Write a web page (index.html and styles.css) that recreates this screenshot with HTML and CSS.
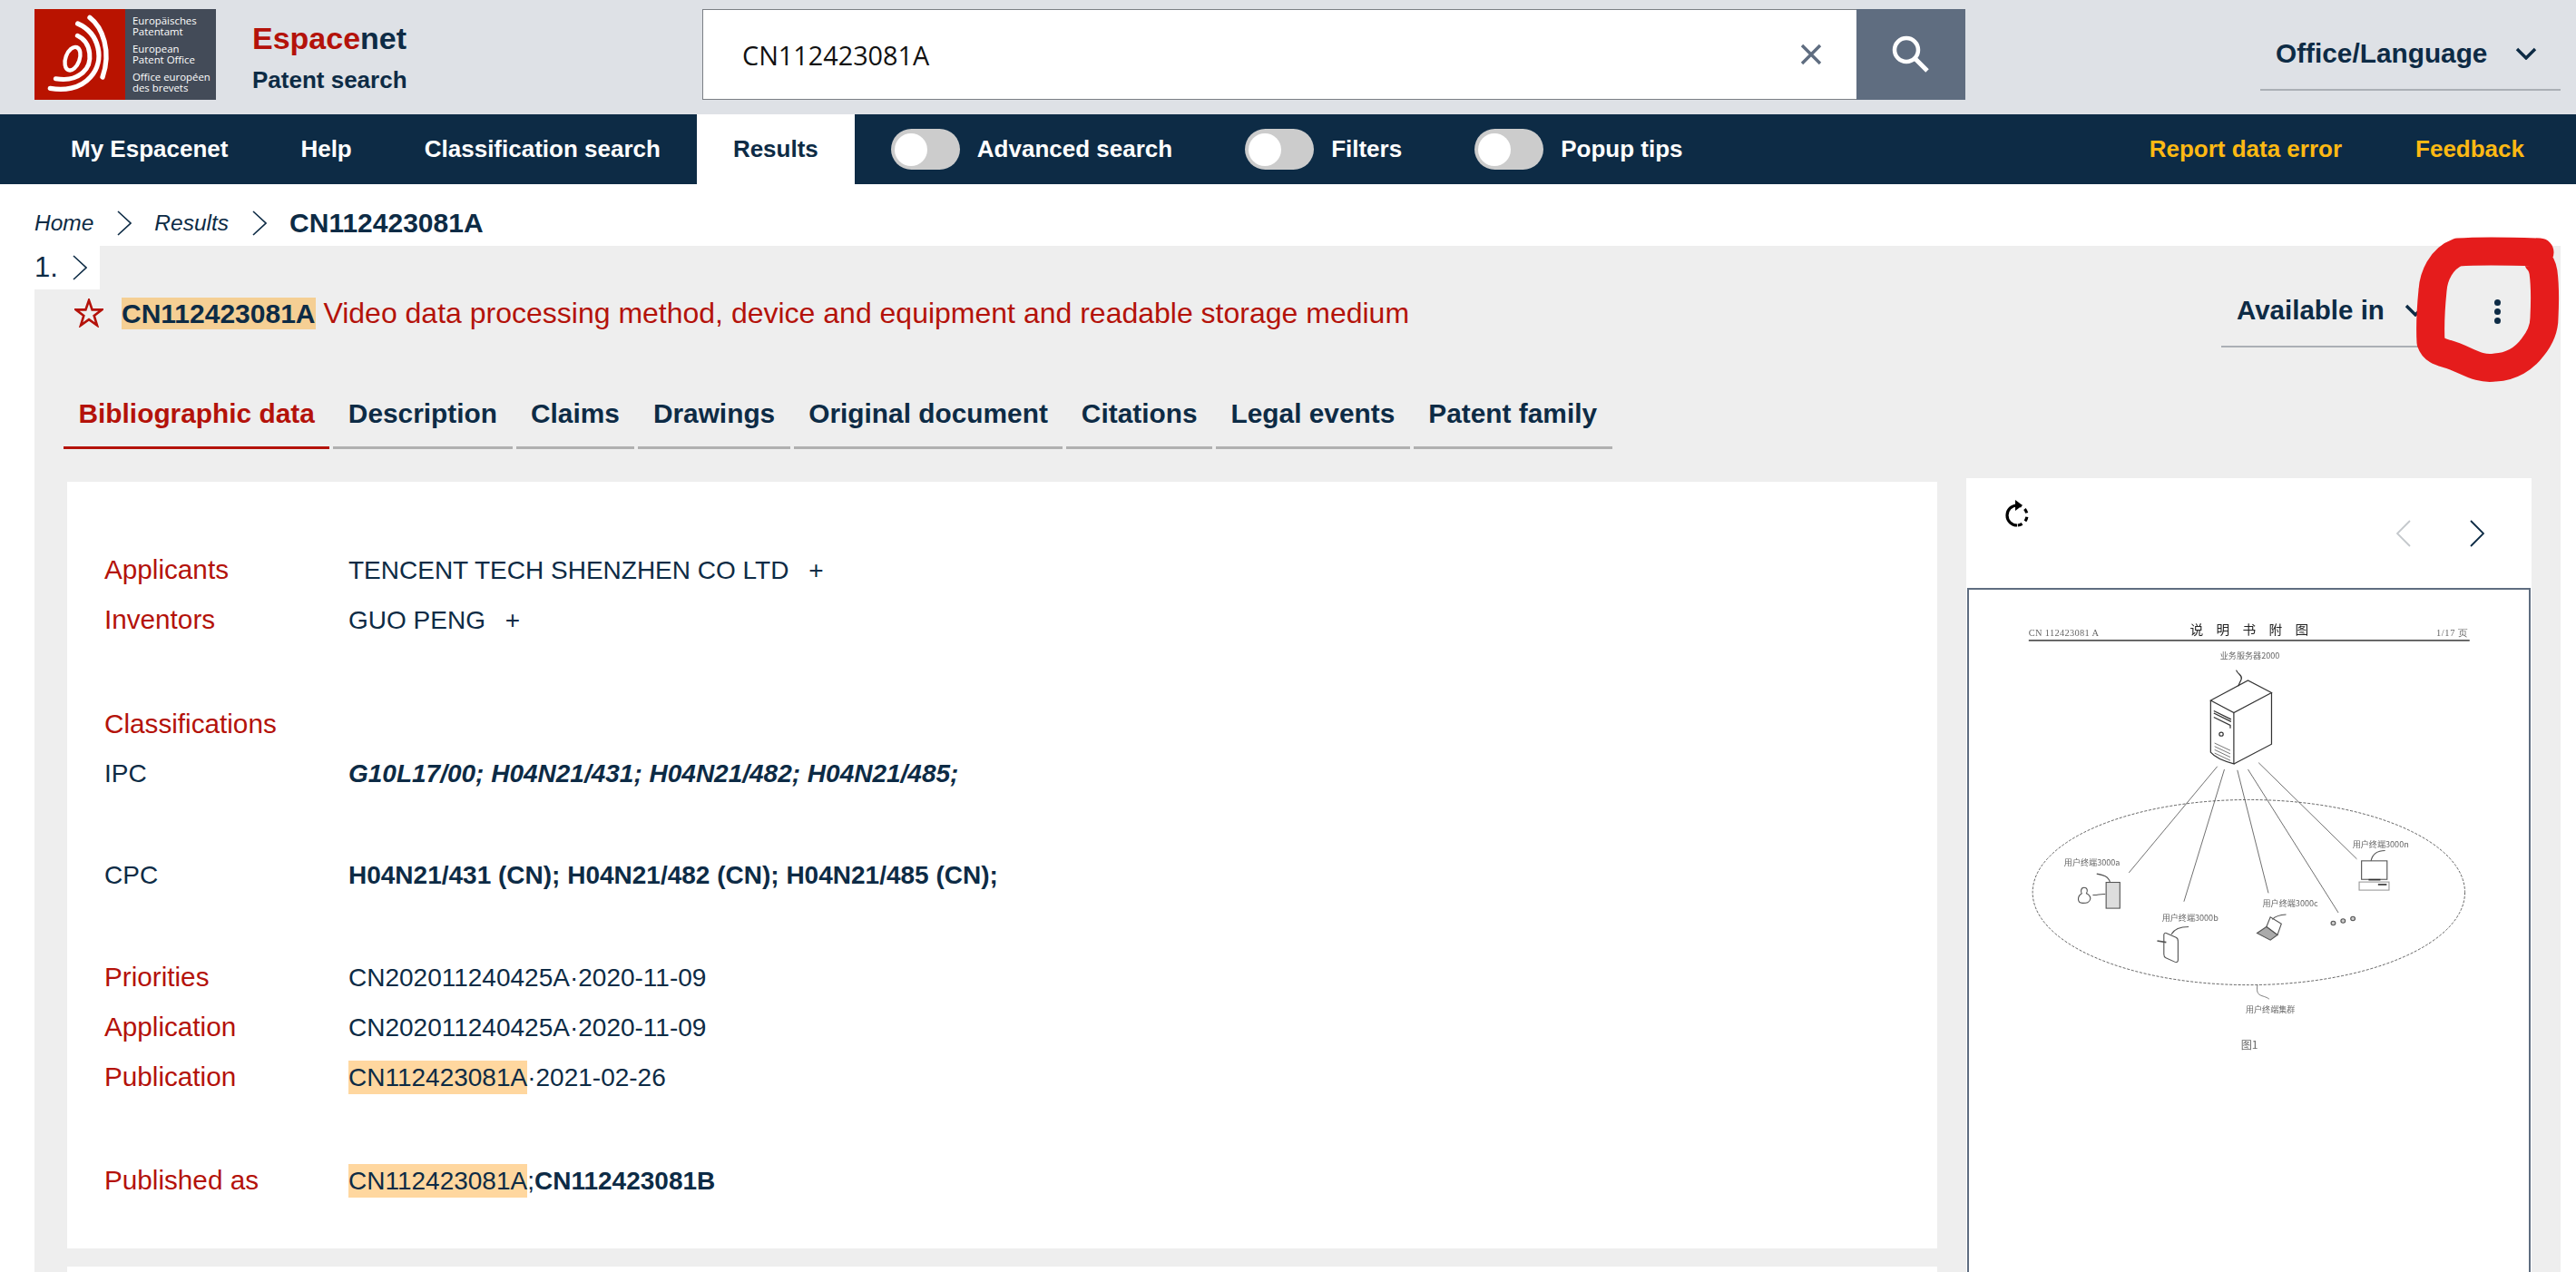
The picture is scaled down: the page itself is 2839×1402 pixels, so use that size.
FILE: index.html
```
<!DOCTYPE html>
<html lang="en">
<head>
  <meta charset="UTF-8">
  <title>Espacenet - CN112423081A</title>
  <link rel="stylesheet" href="styles.css">
</head>
<body>
  <header class="top-header">
    <div class="logo">
      <div class="logo-mark">
        <svg viewBox="0 0 300 300" width="100" height="100">
          <g fill="none" stroke="#fff" stroke-linecap="round">
            <ellipse cx="126" cy="164" rx="23" ry="40" transform="rotate(20 126 164)" stroke-width="13"/>
            <path d="M183 28C225 60 255 140 225 225" stroke-width="16"/>
            <path d="M143 48C215 80 235 170 185 225C150 265 95 270 52 262" stroke-width="16"/>
            <path d="M142 88C190 110 195 180 160 210C130 235 100 235 70 230" stroke-width="15"/>
          </g>
        </svg>
      </div>
      <div class="logo-text">
        <p>Europäisches<br>Patentamt</p>
        <p>European<br>Patent Office</p>
        <p>Office européen<br>des brevets</p>
      </div>
    </div>
    <div class="brand">
      <div class="brand-name"><span class="brand-red">Espace</span>net</div>
      <div class="brand-sub">Patent search</div>
    </div>
    <div class="search">
      <div class="search-input">
        <span>CN112423081A</span>
        <svg class="clear-icon" viewBox="0 0 24 24" width="24" height="24">
          <path d="M2 2L22 22M22 2L2 22" stroke="#5f6d80" stroke-width="3.4" fill="none"/>
        </svg>
      </div>
      <button class="search-btn">
        <svg viewBox="0 0 42 42" width="42" height="42">
          <circle cx="16" cy="16" r="13" fill="none" stroke="#fff" stroke-width="4.5"/>
          <path d="M26 26L39 39" stroke="#fff" stroke-width="5" fill="none"/>
        </svg>
      </button>
    </div>
    <div class="lang">
      <span>Office/Language</span>
      <svg viewBox="0 0 24 14" width="24" height="14"><path d="M2 2L12 12L22 2" fill="none" stroke="#0d2b45" stroke-width="3.4"/></svg>
    </div>
  </header>

  <nav class="main-nav">
    <a class="nav-item">My Espacenet</a>
    <a class="nav-item">Help</a>
    <a class="nav-item">Classification search</a>
    <a class="nav-item active">Results</a>
    <div class="toggle first"><span class="track"><span class="knob"></span></span>Advanced search</div>
    <div class="toggle"><span class="track"><span class="knob"></span></span>Filters</div>
    <div class="toggle"><span class="track"><span class="knob"></span></span>Popup tips</div>
    <div class="nav-right">
      <a>Report data error</a>
      <a>Feedback</a>
    </div>
  </nav>

  <div class="breadcrumb">
    <span class="crumb">Home</span>
    <svg class="chev" viewBox="0 0 16 28" width="16" height="28"><path d="M1 1L15 14L1 27" fill="none" stroke="#0d2b45" stroke-width="1.6"/></svg>
    <span class="crumb">Results</span>
    <svg class="chev" viewBox="0 0 16 28" width="16" height="28"><path d="M1 1L15 14L1 27" fill="none" stroke="#0d2b45" stroke-width="1.6"/></svg>
    <strong>CN112423081A</strong>
  </div>

  <main class="result">
    <div class="rank">
      <span>1.</span>
      <svg viewBox="0 0 16 28" width="16" height="28"><path d="M1 1L15 14L1 27" fill="none" stroke="#0d2b45" stroke-width="1.6"/></svg>
    </div>

    <div class="title-row">
      <svg class="star" viewBox="0 0 32 32" width="32" height="32">
        <path d="M16 2L19.6 12.4H30.4L21.7 18.9L25 29.6L16 23.2L7 29.6L10.3 18.9L1.6 12.4H12.4Z" fill="none" stroke="#b4120a" stroke-width="2.6"/>
      </svg>
      <h1 class="title"><mark class="title-mark">CN112423081A</mark> Video data processing method, device and equipment and readable storage medium</h1>
      <div class="avail">
        <span>Available in</span>
        <svg viewBox="0 0 24 14" width="24" height="14"><path d="M2 2L12 12L22 2" fill="none" stroke="#0d2b45" stroke-width="3.4"/></svg>
      </div>
      <div class="dots"><i></i><i></i><i></i></div>
    </div>

    <div class="tabs">
      <a class="tab active">Bibliographic data</a>
      <a class="tab">Description</a>
      <a class="tab">Claims</a>
      <a class="tab">Drawings</a>
      <a class="tab">Original document</a>
      <a class="tab">Citations</a>
      <a class="tab">Legal events</a>
      <a class="tab">Patent family</a>
    </div>

    <div class="columns">
      <div class="left-col">
        <section class="card biblio">
          <div class="row"><span class="lbl">Applicants</span><span>TENCENT TECH SHENZHEN CO LTD <span class="plus">+</span></span></div>
          <div class="row"><span class="lbl">Inventors</span><span>GUO PENG <span class="plus">+</span></span></div>
          <div class="row sep-a"><span class="lbl">Classifications</span></div>
          <div class="row"><span>IPC</span><span class="ipc"><b>G10L17/00; H04N21/431; H04N21/482; H04N21/485;</b></span></div>
          <div class="row sep-b"><span>CPC</span><span><b>H04N21/431 (CN); H04N21/482 (CN); H04N21/485 (CN);</b></span></div>
          <div class="row sep-b"><span class="lbl">Priorities</span><span>CN202011240425A·2020-11-09</span></div>
          <div class="row"><span class="lbl">Application</span><span>CN202011240425A·2020-11-09</span></div>
          <div class="row"><span class="lbl">Publication</span><span><mark>CN112423081A</mark>·2021-02-26</span></div>
          <div class="row sep-c"><span class="lbl">Published as</span><span><mark>CN112423081A</mark>;<b>CN112423081B</b></span></div>
        </section>
        <section class="card second"></section>
      </div>

      <aside class="preview">
        <div class="preview-head">
          <svg class="reload" viewBox="0 0 30 32" width="30" height="32">
            <path d="M15 6A11 11 0 0 0 15 28" fill="none" stroke="#000" stroke-width="3.2"/>
            <path d="M15 6A11 11 0 0 1 15 28" fill="none" stroke="#000" stroke-width="3.2" stroke-dasharray="5 4.5"/>
            <path d="M13 0L21 6L13 12Z" fill="#000"/>
          </svg>
          <div class="pager">
            <svg viewBox="0 0 16 30" width="16" height="30"><path d="M15 1L1 15L15 29" fill="none" stroke="#c4c8cc" stroke-width="1.8"/></svg>
            <svg viewBox="0 0 16 30" width="16" height="30"><path d="M1 1L15 15L1 29" fill="none" stroke="#0d2b45" stroke-width="1.8"/></svg>
          </div>
        </div>
        <div class="thumb">
          <svg class="drawing" viewBox="23 318 1427 1842" preserveAspectRatio="none">
            <text x="175" y="443" class="t-serif" textLength="178">CN 112423081 A</text>
            <text x="585" y="438" class="t-head">说</text>
            <text x="652" y="438" class="t-head">明</text>
            <text x="719" y="438" class="t-head">书</text>
            <text x="786" y="438" class="t-head">附</text>
            <text x="853" y="438" class="t-head">图</text>
            <text x="1212" y="443" class="t-serif" textLength="80">1/17 页</text>
            <path d="M175 455H1297" stroke="#555" stroke-width="4" fill="none"/>
            <text x="662" y="503" class="t-small">业务服务器2000</text>

            <g fill="none" stroke="#333" stroke-width="2.8">
              <path d="M703 535C708 548 720 548 716 560L708 578"/>
              <path d="M638 617L733 563L793 596L697 650Z"/>
              <path d="M638 617V757C650 772 675 782 697 788V650"/>
              <path d="M793 596V735L697 788"/>
              <path d="M646 645L690 668M646 651L690 674" stroke-width="3"/>
              <path d="M646 662L688 684V692"/>
              <circle cx="665" cy="708" r="5"/>
              <path d="M648 732L688 752M648 741L688 761M648 750L688 770M648 759L688 779" stroke-width="1.6"/>
            </g>

            <g fill="none" stroke="#555" stroke-width="2">
              <path d="M655 795L430 1082M673 803L570 1160M706 805L785 1137M733 803L963 1190M760 785L1010 1045"/>
            </g>
            <ellipse cx="735" cy="1135" rx="550" ry="250" fill="none" stroke="#444" stroke-width="2" stroke-dasharray="7 4"/>

            <text x="265" y="1063" class="t-small">用户终端3000a</text>
            <text x="514" y="1213" class="t-small">用户终端3000b</text>
            <text x="770" y="1174" class="t-small">用户终端3000c</text>
            <text x="999" y="1013" class="t-small">用户终端3000n</text>
            <text x="727" y="1460" class="t-small">用户终端集群</text>
            <text x="715" y="1558" class="t-small t-fig">图1</text>

            <g fill="none" stroke="#555" stroke-width="2.6">
              <path d="M348 1085C365 1088 378 1092 382 1108"/>
              <rect x="372" y="1108" width="35" height="70" fill="#ddd"/>
              <path d="M338 1142C348 1144 358 1138 370 1140"/>
              <path d="M316 1122C306 1122 308 1136 310 1138C298 1146 298 1164 312 1164C322 1164 330 1164 332 1152C332 1144 326 1140 322 1138C326 1130 324 1122 316 1122Z"/>
              <path d="M582 1228C560 1228 545 1235 538 1248"/>
              <path d="M525 1245L550 1257C556 1260 555 1265 555 1270V1318C555 1324 550 1325 545 1322L524 1312C520 1310 519 1306 519 1302V1250C519 1246 522 1244 525 1245Z"/>
              <path d="M502 1266L525 1270" stroke-width="4"/>
              <path d="M830 1195C812 1196 802 1200 795 1208"/>
              <path d="M780 1228L790 1202L818 1220L808 1250Z"/>
              <path d="M756 1245L780 1228L808 1250L790 1264Z" fill="#aaa"/>
              <circle cx="950" cy="1218" r="5.5" fill="#ccc"/>
              <circle cx="975" cy="1212" r="5.5" fill="#ccc"/>
              <circle cx="1000" cy="1206" r="5.5" fill="#ccc"/>
              <path d="M1082 1022C1062 1022 1050 1030 1046 1050"/>
              <rect x="1022" y="1050" width="65" height="50"/>
              <path d="M1040 1101H1070" stroke-width="4" stroke="#333"/>
              <rect x="1016" y="1107" width="76" height="22" stroke="#999"/>
              <path d="M1064 1114H1086" stroke-width="4" stroke="#333"/>
              <path d="M757 1385C752 1420 770 1410 787 1423" stroke-width="1.8"/>
            </g>
          </svg>
        </div>
      </aside>
    </div>
  </main>

  <svg class="scribble" viewBox="2660 258 165 170" width="165" height="170">
    <path d="M2799 278C2770 277 2735 276 2709 278C2690 285 2682 305 2681 320C2679 340 2678 360 2679 377C2682 386 2690 388 2697 390C2718 396 2730 408 2750 405C2768 404 2782 395 2791 383C2800 372 2804 360 2804 350C2805 330 2805 315 2803 300C2802 294 2800 290 2797 287" fill="none" stroke="#e51c1c" stroke-width="31" stroke-linecap="round" stroke-linejoin="round"/>
  </svg>
</body>
</html>
```

FILE: styles.css
```
html, body {
  margin: 0;
  height: 1402px;
  overflow: hidden;
}

body {
  position: relative;
  background: white;
  color: #0d2b45;
  font-family: "Liberation Sans", Arial, sans-serif;
  font-size: 28px;
}

p {
  margin: 0;
}

/* header */
.top-header {
  display: flex;
  align-items: flex-start;
  height: 126px;
  padding: 10px 17px 0 38px;
  box-sizing: border-box;
  background: #dee1e6;
}

.logo {
  display: flex;
  width: 200px;
  height: 100px;
  flex: none;
}

.logo-mark {
  width: 100px;
  height: 100px;
  background: #b91300;
}

.logo-text {
  width: 100px;
  padding: 7px 0 0 8px;
  box-sizing: border-box;
  background: #434b58;
  color: white;
  font-family: "Open Sans", sans-serif;
  font-size: 11.4px;
  line-height: 12px;
}

.logo-text p {
  margin-bottom: 7px;
}

.brand {
  margin: 12px 0 0 40px;
  width: 496px;
  flex: none;
  font-weight: bold;
}

.brand-name {
  font-size: 34px;
  line-height: 40px;
}

.brand-red {
  color: #b4120a;
}

.brand-sub {
  margin-top: 11px;
  font-size: 26px;
  line-height: 30px;
}

.search {
  display: flex;
  width: 1392px;
  height: 100px;
  flex: none;
}

.search-input {
  display: flex;
  align-items: center;
  justify-content: space-between;
  flex: 1;
  padding: 0 38px 0 43px;
  background: white;
  border: 1px solid #7b7f85;
  border-right: none;
  box-sizing: border-box;
  color: #111;
  font-family: "Open Sans", sans-serif;
  font-size: 28.8px;
}

.search-btn {
  display: flex;
  align-items: center;
  justify-content: center;
  width: 120px;
  padding: 0;
  background: #5f6d80;
  border: none;
}

.lang {
  display: flex;
  align-items: center;
  justify-content: space-between;
  width: 331px;
  height: 66px;
  margin: 24px 0 0 auto;
  padding: 0 26px 14px 17px;
  box-sizing: border-box;
  border-bottom: 2px solid #abafb5;
  font-size: 29.8px;
  font-weight: bold;
}

/* nav bar */
.main-nav {
  display: flex;
  align-items: center;
  height: 77px;
  padding: 0 57px 0 38px;
  background: #0d2b45;
  color: white;
  font-size: 26px;
  font-weight: bold;
}

.nav-item {
  display: flex;
  align-items: center;
  height: 100%;
  padding: 0 40px;
}

.nav-item.active {
  background: white;
  color: #0d2b45;
}

.toggle {
  display: flex;
  align-items: center;
  gap: 19px;
  margin-left: 80px;
}

.toggle.first {
  margin-left: 40px;
}

.track {
  display: flex;
  align-items: center;
  width: 76px;
  height: 45px;
  padding: 0 4px;
  box-sizing: border-box;
  background: #ccc;
  border-radius: 23px;
}

.knob {
  width: 36px;
  height: 36px;
  background: white;
  border-radius: 50%;
}

.nav-right {
  display: flex;
  gap: 81px;
  margin-left: auto;
  color: #fdb913;
}

/* breadcrumb */
.breadcrumb {
  display: flex;
  align-items: center;
  height: 68px;
  padding: 18px 0 0 38px;
  box-sizing: border-box;
}

.crumb {
  font-size: 24.5px;
  font-style: italic;
}

.chev {
  margin: 0 25.5px;
}

.breadcrumb strong {
  font-size: 30px;
}

/* result panel */
.result {
  width: 2784px;
  height: 1131px;
  margin-left: 38px;
  background: #eee;
}

.rank {
  display: flex;
  align-items: center;
  gap: 16px;
  width: 72px;
  height: 48px;
  background: white;
  font-size: 31px;
}

.title-row {
  display: flex;
  align-items: center;
  height: 52px;
  padding: 0 0 0 44px;
}

.star {
  flex: none;
  margin-right: 20px;
}

.title {
  margin: 0;
  color: #b4120a;
  font-size: 32px;
  font-weight: normal;
  flex: 1;
}

.title-mark {
  padding: 1px 0;
  background: #f5cf94;
  font-size: 30px;
  font-weight: bold;
}

.avail {
  display: flex;
  align-items: center;
  justify-content: space-between;
  width: 242px;
  height: 64px;
  padding: 0 16px 16px 17px;
  box-sizing: border-box;
  position: relative;
  top: 6px;
  border-bottom: 2px solid #abafb5;
  font-size: 29.5px;
  font-weight: bold;
}

.dots {
  display: flex;
  flex-direction: column;
  gap: 3px;
  width: 132px;
  margin-top: -4px;
  padding-left: 59px;
  box-sizing: border-box;
}

.dots i {
  width: 7px;
  height: 7px;
  background: #0d2b45;
  border-radius: 50%;
}

.tabs {
  display: flex;
  gap: 4px;
  margin: 68px 0 0 32px;
}

.tab {
  padding: 0 16.5px 19px;
  border-bottom: 3px solid #b0b0b0;
  font-size: 29.85px;
  font-weight: bold;
}

.tab.active {
  color: #b4120a;
  border-bottom-color: #b4120a;
}

.columns {
  display: flex;
  gap: 32px;
  margin: 32px 0 0 36px;
}

.left-col {
  width: 2061px;
  flex: none;
  padding-top: 4px;
}

.card {
  background: white;
}

.biblio {
  padding: 69px 0 48px 41px;
}

.second {
  height: 6px;
  margin-top: 20px;
}

.row {
  display: grid;
  grid-template-columns: 269px 1fr;
  align-items: baseline;
  height: 55px;
  line-height: 55px;
}

.row.sep-a {
  margin-top: 60px;
}

.row.sep-b {
  margin-top: 57px;
}

.row.sep-c {
  margin-top: 59px;
}

.lbl {
  color: #b4120a;
  font-size: 29.7px;
}

.plus {
  margin-left: 14px;
}

mark {
  padding: 3px 0;
  background: #ffd79f;
  color: #0d2b45;
}

.ipc {
  font-style: italic;
}

/* drawing preview */
.preview {
  width: 623px;
  flex: none;
  background: white;
}

.preview-head {
  display: flex;
  justify-content: space-between;
  height: 121px;
  padding: 24px 52px 0 41px;
  box-sizing: border-box;
}

.reload {
  flex: none;
}

.pager {
  display: flex;
  gap: 65px;
  margin-top: 22px;
}

.thumb {
  height: 754px;
  margin: 0 1px;
  border: 2px solid #5f6d80;
  border-bottom: none;
  box-sizing: border-box;
  background: white;
}

.drawing {
  display: block;
  width: 618px;
  height: 752px;
  filter: blur(0.4px);
}

.t-head {
  font-family: "Noto Sans CJK SC", sans-serif;
  font-size: 34px;
  fill: #222;
}

.t-serif {
  font-family: "Liberation Serif", serif;
  font-size: 24px;
  fill: #666;
}

.t-small {
  font-family: "Noto Sans CJK SC", sans-serif;
  font-size: 21px;
  fill: #666;
}

.t-fig {
  font-size: 28px;
}

.scribble {
  position: absolute;
  left: 2660px;
  top: 258px;
}
```
